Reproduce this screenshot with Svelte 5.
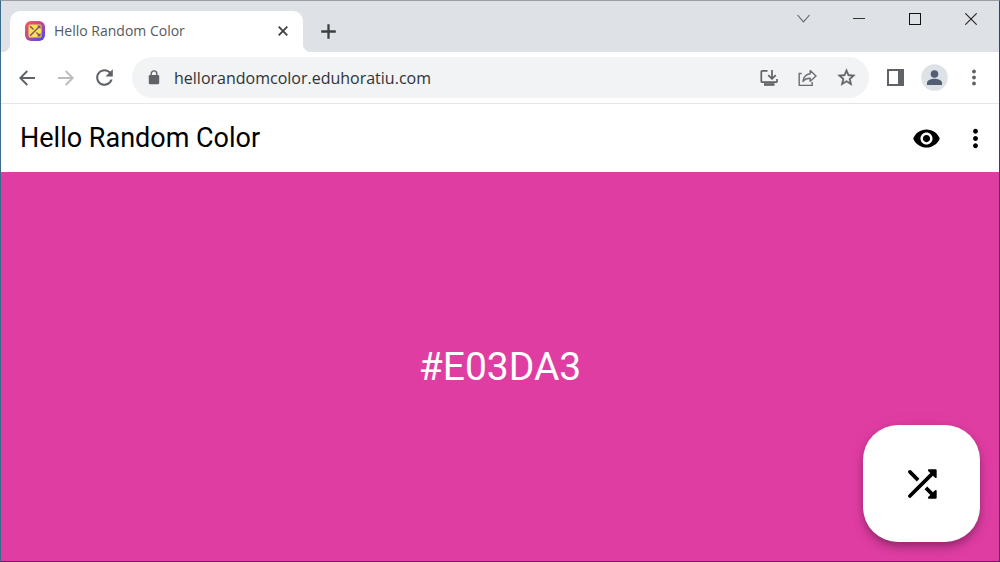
<script>
  let color = $state('#E03DA3');
  let url = $state('hellorandomcolor.eduhoratiu.com');

  function shuffle() {
    const value = Math.floor(Math.random() * 0x1000000);
    color = '#' + value.toString(16).padStart(6, '0').toUpperCase();
  }
</script>

{#snippet shufflePaths()}
  <path d="M10.59 9.17L6.12 4.7c-.39-.39-1.02-.39-1.41 0-.39.39-.39 1.02 0 1.41l4.46 4.46 1.42-1.4zm4.76-4.32l1.19 1.19L4.7 17.88c-.39.39-.39 1.02 0 1.41.39.39 1.02.39 1.41 0L17.96 7.46l1.19 1.19c.31.31.85.09.85-.36V4.5c0-.28-.22-.5-.5-.5h-3.79c-.45 0-.67.54-.36.85zm-.52 8.56l-1.41 1.41 3.13 3.13-1.2 1.2c-.31.31-.09.85.36.85h3.79c.28 0 .5-.22.5-.5v-3.79c0-.45-.54-.67-.85-.35l-1.19 1.19-3.13-3.14z" />
{/snippet}

<div class="window">
  <div class="tabstrip">
    <div class="tab">
      <svg class="favicon" width="20" height="20" viewBox="0 0 20 20" aria-hidden="true">
        <defs>
          <linearGradient id="frame" x1="0" y1="0" x2="1" y2="1">
            <stop offset="0" stop-color="#ff5a4e" />
            <stop offset="0.5" stop-color="#b8479a" />
            <stop offset="1" stop-color="#3b48ff" />
          </linearGradient>
        </defs>
        <rect width="20" height="20" rx="6" fill="url(#frame)" />
        <rect x="3.5" y="3.5" width="13" height="13" rx="1.5" fill="#f3e455" />
        <g transform="translate(1.6 1.6) scale(0.7)" fill="#8a4a6c">{@render shufflePaths()}</g>
      </svg>
      <span class="tab-title">Hello Random Color</span>
      <button class="tab-close" aria-label="Close tab">
        <svg width="10" height="10" viewBox="0 0 10 10"><path d="M.7 .7l8.6 8.6M9.3 .7L.7 9.3" stroke="#3c4043" stroke-width="1.8" /></svg>
      </button>
    </div>
    <button class="new-tab" aria-label="New tab">
      <svg width="15" height="15" viewBox="0 0 15 15"><path d="M7.5 .2v14.6M.2 7.5h14.6" stroke="#3c4043" stroke-width="2.3" /></svg>
    </button>
    <div class="controls">
      <button aria-label="Search tabs">
        <svg width="13" height="9" viewBox="0 0 13 9"><path d="M.5 1l6 6.8 6-6.8" fill="none" stroke="#606367" stroke-width="1.1" /></svg>
      </button>
      <button aria-label="Minimize">
        <svg width="12" height="12" viewBox="0 0 12 12"><path d="M0 5.5h12" stroke="#333" /></svg>
      </button>
      <button aria-label="Maximize">
        <svg width="12" height="12" viewBox="0 0 12 12"><rect x=".5" y=".5" width="11" height="11" fill="none" stroke="#111" /></svg>
      </button>
      <button aria-label="Close">
        <svg width="12" height="12" viewBox="0 0 12 12"><path d="M.3 .3l11.4 11.4M11.7 .3L.3 11.7" stroke="#222" stroke-width="1.1" /></svg>
      </button>
    </div>
  </div>

  <div class="toolbar">
    <button class="tool" aria-label="Back">
      <svg width="16" height="16" viewBox="0 0 16 16"><path d="M16 8H1.5M8.3 1L1.3 8l7 7" fill="none" stroke="#5f6368" stroke-width="1.9" /></svg>
    </button>
    <button class="tool" aria-label="Forward" disabled>
      <svg width="16" height="16" viewBox="0 0 16 16"><path d="M0 8h14.5M7.7 1l7 7-7 7" fill="none" stroke="#babcbe" stroke-width="1.9" /></svg>
    </button>
    <button class="tool" aria-label="Reload">
      <svg width="25" height="25" viewBox="0 0 24 24"><path fill="#5f6368" d="M17.65 6.35C16.2 4.9 14.21 4 12 4c-4.42 0-7.99 3.58-7.99 8s3.57 8 7.99 8c3.73 0 6.84-2.55 7.73-6h-2.08c-.82 2.33-3.04 4-5.65 4-3.31 0-6-2.69-6-6s2.69-6 6-6c1.66 0 3.14.69 4.22 1.78L13 11h7V4l-2.35 2.35z" /></svg>
    </button>
    <div class="omnibox">
      <svg class="lock" width="12" height="15" viewBox="0 0 12 15" aria-hidden="true">
        <path d="M3.2 6V3.7a2.8 2.8 0 0 1 5.6 0V6" fill="none" stroke="#5f6368" stroke-width="1.4" />
        <rect x=".8" y="5" width="10.4" height="9.2" rx="1.2" fill="#5f6368" />
      </svg>
      <input class="url" type="text" aria-label="Address" spellcheck="false" bind:value={url} />
      <button class="tool" aria-label="Install app">
        <svg width="18" height="18" viewBox="0 0 18 18" fill="none" stroke="#5f6368" stroke-width="1.7">
          <path d="M7.5 1.8H2.3Q1.3 1.8 1.3 2.8V12.2Q1.3 13.2 2.3 13.2H16Q17 13.2 17 12.2V10" />
          <path d="M12 1v8.4M8.2 6.2l3.8 3.7 3.8-3.7" />
          <path d="M4 15.5h10.5" stroke-width="2.6" />
        </svg>
      </button>
      <button class="tool" aria-label="Share">
        <svg width="19" height="18" viewBox="0 0 19 18" fill="none" stroke="#6a6e72" stroke-width="1.4">
          <path d="M3.6 4.5H1.2V16.4H14.2V13" />
          <path d="M12.2 1.6L18 7l-5.8 5.3V9.2C8.8 9.1 6.7 10.2 5 12.4 5.5 8.6 7.5 5.3 12.2 4.8z" stroke-linejoin="round" />
        </svg>
      </button>
      <button class="tool" aria-label="Bookmark">
        <svg width="21" height="21" viewBox="0 0 24 24"><path fill="#5f6368" stroke="#5f6368" stroke-width=".5" d="M22 9.24l-7.19-.62L12 2 9.19 8.63 2 9.24l5.46 4.73L5.82 21 12 17.27 18.18 21l-1.63-7.03L22 9.24zM12 15.4l-3.76 2.27 1-4.28-3.32-2.88 4.38-.38L12 6.1l1.71 4.04 4.38.38-3.32 2.88 1 4.28L12 15.4z" /></svg>
      </button>
    </div>
    <button class="tool" aria-label="Side panel">
      <svg width="17" height="17" viewBox="0 0 17 17"><path fill="#5f6368" fill-rule="evenodd" d="M0 0h17v17H0zM2 2v13h9V2z" /></svg>
    </button>
    <button class="tool" aria-label="Profile">
      <svg width="27" height="27" viewBox="0 0 27 27">
        <circle cx="13.5" cy="13.5" r="13.3" fill="#dee1e6" />
        <circle cx="13.5" cy="10" r="3.8" fill="#525e73" />
        <path d="M6 21v-2.3c0-2.6 4.8-3.9 7.5-3.9s7.5 1.3 7.5 3.9V21z" fill="#525e73" />
      </svg>
    </button>
    <button class="tool" aria-label="Browser menu">
      <svg width="4" height="17" viewBox="0 0 4 17" fill="#5f6368"><circle cx="2" cy="2.5" r="1.9" /><circle cx="2" cy="8.5" r="1.9" /><circle cx="2" cy="14.5" r="1.9" /></svg>
    </button>
  </div>

  <header class="appbar">
    <h1>Hello Random Color</h1>
    <button aria-label="Preview color">
      <svg width="29" height="29" viewBox="0 0 24 24"><path d="M12 4.5C7 4.5 2.73 7.61 1 12c1.73 4.39 6 7.5 11 7.5s9.27-3.11 11-7.5c-1.73-4.39-6-7.5-11-7.5zM12 17c-2.76 0-5-2.24-5-5s2.24-5 5-5 5 2.24 5 5-2.24 5-5 5zm0-8c-1.66 0-3 1.34-3 3s1.34 3 3 3 3-1.34 3-3-1.34-3-3-3z" /></svg>
    </button>
    <button aria-label="More options">
      <svg width="29" height="29" viewBox="0 0 24 24"><path d="M12 8c1.1 0 2-.9 2-2s-.9-2-2-2-2 .9-2 2 .9 2 2 2zm0 2c-1.1 0-2 .9-2 2s.9 2 2 2 2-.9 2-2-.9-2-2-2zm0 6c-1.1 0-2 .9-2 2s.9 2 2 2 2-.9 2-2-.9-2-2-2z" /></svg>
    </button>
  </header>

  <main style:background-color={color}>
    <p class="hex">{color}</p>
    <button class="fab" aria-label="Shuffle color" onclick={shuffle}>
      <svg width="44" height="44" viewBox="0 0 24 24">{@render shufflePaths()}</svg>
    </button>
  </main>
</div>

<style>
  :global(body) {
    margin: 0;
  }
  .window {
    box-sizing: border-box;
    min-height: 100vh;
    display: flex;
    flex-direction: column;
    border: 1px solid;
    border-color: #9a9da3 #34406e #4a2a66 #3b6b8c;
    background: #fff;
    font-family: "Open Sans", "Noto Sans", sans-serif;
  }
  button {
    display: flex;
    align-items: center;
    justify-content: center;
    padding: 0;
    border: 0;
    background: none;
    flex: none;
  }
  svg {
    display: block;
    flex: none;
  }
  .tabstrip {
    display: flex;
    align-items: flex-end;
    height: 51px;
    padding-left: 9px;
    background: #dee1e6;
  }
  .tab {
    position: relative;
    box-sizing: border-box;
    display: flex;
    align-items: center;
    gap: 9px;
    width: 293px;
    height: 41px;
    padding: 0 10px 1px 15px;
    border-radius: 10px 10px 0 0;
    background: #fff;
  }
  .tab::before,
  .tab::after {
    content: "";
    position: absolute;
    bottom: 0;
    width: 9px;
    height: 9px;
  }
  .tab::before {
    right: 100%;
    background: radial-gradient(circle at 0 0, #dee1e6 9px, #fff 10px);
  }
  .tab::after {
    left: 100%;
    background: radial-gradient(circle at 100% 0, #dee1e6 9px, #fff 10px);
  }
  .tab-title {
    flex: 1;
    font-size: 14px;
    line-height: 20px;
    color: #55595d;
    white-space: nowrap;
  }
  .tab-close {
    width: 20px;
    height: 20px;
  }
  .new-tab {
    width: 36px;
    height: 41px;
    margin-left: 7px;
  }
  .controls {
    display: flex;
    align-self: flex-start;
    margin-left: auto;
  }
  .controls button {
    width: 56px;
    height: 35px;
  }
  .toolbar {
    display: flex;
    align-items: center;
    height: 51px;
    padding: 0 6px;
    border-bottom: 1px solid #e4e5e7;
  }
  .tool {
    width: 39px;
    height: 39px;
  }
  .omnibox {
    flex: 1;
    min-width: 0;
    display: flex;
    align-items: center;
    height: 41px;
    margin: 0 7px 0 8px;
    padding: 0 3px 0 16px;
    border-radius: 21px;
    background: #f1f3f4;
  }
  .url {
    flex: 1;
    min-width: 0;
    margin-left: 14px;
    padding: 0;
    border: 0;
    outline: 0;
    background: none;
    color: #303236;
    font: 16px/24px "Open Sans", "Noto Sans", sans-serif;
  }
  .appbar {
    display: flex;
    align-items: center;
    gap: 10px;
    height: 68px;
    padding: 0 4px 0 19px;
    font-family: Roboto, sans-serif;
  }
  .appbar button {
    width: 39px;
    height: 39px;
  }
  h1 {
    flex: 1;
    margin: 0;
    font-size: 27px;
    font-weight: 400;
    line-height: 32px;
    color: #000;
  }
  main {
    position: relative;
    flex: 1;
    display: flex;
    align-items: center;
    justify-content: center;
  }
  .hex {
    margin: 0;
    font: 39px/48px Roboto, sans-serif;
    color: #fff;
  }
  .fab {
    position: absolute;
    right: 19px;
    bottom: 19px;
    width: 117px;
    height: 117px;
    border-radius: 35px;
    background: #fff;
    box-shadow: 0 4px 6px -1px rgba(0, 0, 0, 0.2), 0 7px 12px rgba(0, 0, 0, 0.14), 0 1px 16px rgba(0, 0, 0, 0.08);
  }
</style>
